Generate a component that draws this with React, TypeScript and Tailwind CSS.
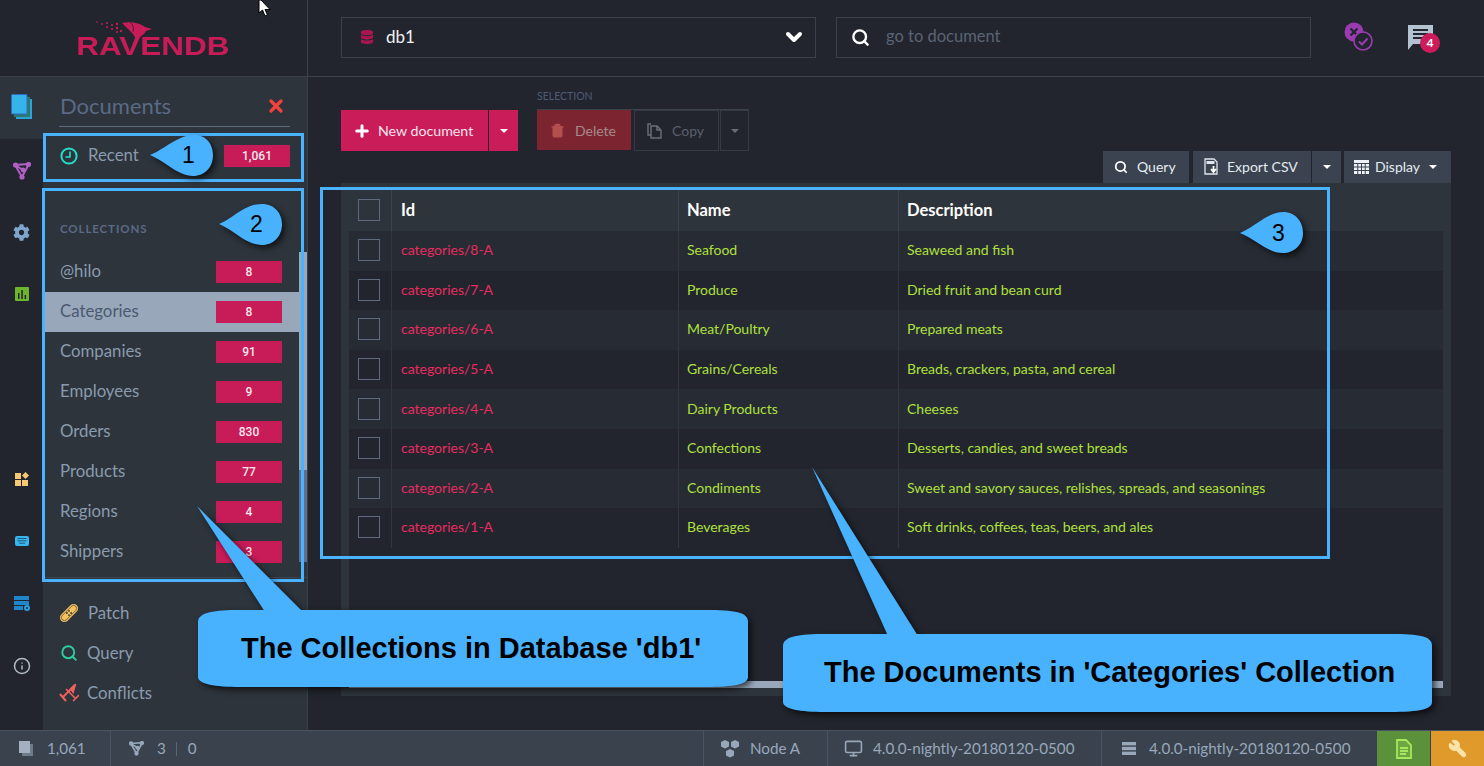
import { ChevronDown, Search, Info, Plus, Trash2, X, Monitor, Wrench } from 'lucide-react';
import { FaCog, FaDatabase } from 'react-icons/fa';

const collections = [
  { name: '@hilo', count: '8' },
  { name: 'Categories', count: '8', active: true },
  { name: 'Companies', count: '91' },
  { name: 'Employees', count: '9' },
  { name: 'Orders', count: '830' },
  { name: 'Products', count: '77' },
  { name: 'Regions', count: '4' },
  { name: 'Shippers', count: '3' },
];

const rows = [
  ['categories/8-A', 'Seafood', 'Seaweed and fish'],
  ['categories/7-A', 'Produce', 'Dried fruit and bean curd'],
  ['categories/6-A', 'Meat/Poultry', 'Prepared meats'],
  ['categories/5-A', 'Grains/Cereals', 'Breads, crackers, pasta, and cereal'],
  ['categories/4-A', 'Dairy Products', 'Cheeses'],
  ['categories/3-A', 'Confections', 'Desserts, candies, and sweet breads'],
  ['categories/2-A', 'Condiments', 'Sweet and savory sauces, relishes, spreads, and seasonings'],
  ['categories/1-A', 'Beverages', 'Soft drinks, coffees, teas, beers, and ales'],
];

function Caret({ className = 'border-t-white' }: { className?: string }) {
  return <span className={`inline-block w-0 h-0 border-x-[4px] border-x-transparent border-t-[4px] ${className}`} />;
}

function Badge({ value, width = 'w-[66px]' }: { value: string; width?: string }) {
  return (
    <span className={`${width} h-[22px] bg-[#c81c58] text-[#f5e6ee] text-[12px] font-[Roboto,sans-serif] font-medium flex items-center justify-center shrink-0`}>
      {value}
    </span>
  );
}

function GitIcon({ color, size = 18 }: { color: string; size?: number }) {
  return (
    <svg width={size} height={size} viewBox="0 0 18 18" fill="none" stroke={color} strokeWidth="2">
      <path d="M2 3 L16 2 L9 15 Z M2 3 L10 8" />
      <circle cx="2.5" cy="3" r="1.6" fill={color} />
      <circle cx="15.5" cy="2.5" r="1.6" fill={color} />
      <circle cx="9" cy="15" r="1.6" fill={color} />
      <circle cx="10" cy="8" r="1.4" fill={color} />
    </svg>
  );
}

function RailIcons() {
  return (
    <div className="w-[43px] shrink-0 flex flex-col items-center">
      <div className="w-full h-[62px] bg-[#2d343b] flex items-center justify-center pb-[2px]">
        <svg width="22" height="26" viewBox="0 0 22 26">
          <rect x="5" y="5" width="16" height="20" fill="#2aa3d6" />
          <rect x="3" y="3" width="16" height="20" fill="#2c7a6f" />
          <rect x="0.5" y="0.5" width="15.5" height="19.5" rx="1" fill="#35b4ec" stroke="#3467c7" />
        </svg>
      </div>
      <div className="h-[63px] flex items-center justify-center">
        <GitIcon color="#b45fc4" />
      </div>
      <div className="h-[61px] flex items-center justify-center">
        <FaCog size={17} color="#7ea6cc" />
      </div>
      <div className="h-[62px] flex items-center justify-center">
        <svg width="14" height="14" viewBox="0 0 14 14">
          <rect width="14" height="14" rx="1" fill="#6cb52d" />
          <path d="M3 6h1.5v6H3zM6.3 3h1.5v9H6.3zM9.6 8h1.5v4H9.6z" fill="#22252d" />
        </svg>
      </div>
      <div className="h-[123px]" />
      <div className="h-[62px] flex items-center justify-center">
        <svg width="14" height="14" viewBox="0 0 14 14" fill="#f7c873">
          <rect x="0" y="1" width="6" height="6" />
          <rect x="0" y="8" width="6" height="6" />
          <rect x="7" y="8" width="6" height="6" />
          <path d="M10.5 0 L14 3.5 L10.5 7 L7 3.5 Z" />
        </svg>
      </div>
      <div className="h-[62px] flex items-center justify-center">
        <svg width="14" height="10" viewBox="0 0 14 10">
          <rect width="14" height="10" rx="2" fill="#39b5ee" />
          <path d="M2.5 2.5h9M2.5 4.8h9M4 7.2h6" stroke="#1d5a7f" strokeWidth="1" />
        </svg>
      </div>
      <div className="h-[63px] flex items-center justify-center">
        <svg width="16" height="15" viewBox="0 0 16 15" fill="#1f86c9">
          <rect width="15" height="4" />
          <rect y="5" width="15" height="4" />
          <rect y="10" width="9" height="4" />
          <circle cx="13" cy="12" r="3" fill="#2aa0e6" />
          <circle cx="13" cy="12" r="1" fill="#22252d" />
        </svg>
      </div>
      <div className="h-[61px] flex items-center justify-center">
        <Info size={18} color="#b2bbc7" strokeWidth={2} />
      </div>
    </div>
  );
}

function DocumentsPanel() {
  return (
    <div className="flex-1 min-w-0 bg-[#2d343b] flex flex-col">
      <div className="h-[50px] mx-[16px] w-[231px] border-b border-[#5d6a80] flex items-center justify-between pr-[4px] pt-[8px]">
        <span className="text-[22px] text-[#5b6a85] pl-px">Documents</span>
        <X size={20} color="#f0413c" strokeWidth={4} />
      </div>
      <div className="h-[57px] pl-[17px] pr-[17px] flex items-center">
        <svg width="18" height="18" viewBox="0 0 18 18" fill="none" stroke="#26dccb" strokeWidth="2">
          <circle cx="9" cy="9" r="7.6" />
          <path d="M10 4.5V10H5.5" strokeWidth="1.6" />
        </svg>
        <span className="ml-[10px] pb-[2px] text-[16.8px] text-[#8a9bae] flex-1">Recent</span>
        <Badge value="1,061" />
      </div>
      <div className="h-[394px] flex border-b border-[#3d4550]">
        <div className="flex-1 min-w-0 flex flex-col">
          <div className="h-[68px] shrink-0 flex items-end pb-[15px] pl-[17px] text-[11.5px] font-bold tracking-[0.9px] text-[#5b6a85]">COLLECTIONS</div>
          {collections.map((c) => (
            <div key={c.name} className={`h-[40px] shrink-0 pl-[17px] pr-[17px] flex items-center justify-between text-[16.8px] ${c.active ? 'bg-[#98a8ba] text-[#4b5870]' : 'text-[#8a9bae]'}`}>
              <span className="pb-[2px]">{c.name}</span>
              <Badge value={c.count} />
            </div>
          ))}
        </div>
        <div className="w-[8px] shrink-0 pt-[68px] flex flex-col">
          <div className="h-[218px] bg-[#98a8ba]" />
          <div className="h-[92px] bg-[#5f6f8f]" />
        </div>
      </div>
      <div className="pt-[15px] flex flex-col text-[16.8px] text-[#8a9bae]">
        <div className="h-[40px] flex items-center pl-[16px]">
          <svg width="20" height="20" viewBox="0 0 20 20">
            <g transform="rotate(45 10 10)">
              <rect x="5.5" y="-1" width="9" height="22" rx="4.5" fill="#f5c15c" />
              <rect x="7" y="0.5" width="6" height="19" rx="3" fill="none" stroke="#2d343b" strokeWidth="0.6" />
              <circle cx="8.5" cy="8.5" r="0.9" fill="#2d343b" />
              <circle cx="11.5" cy="8.5" r="0.9" fill="#2d343b" />
              <circle cx="8.5" cy="11.5" r="0.9" fill="#2d343b" />
              <circle cx="11.5" cy="11.5" r="0.9" fill="#2d343b" />
            </g>
          </svg>
          <span className="ml-[9px]">Patch</span>
        </div>
        <div className="h-[40px] flex items-center pl-[17px]">
          <Search size={18} color="#2ecf9f" strokeWidth={2.5} />
          <span className="ml-[9px]">Query</span>
        </div>
        <div className="h-[40px] flex items-center pl-[16px]">
          <svg width="20" height="18" viewBox="0 0 20 18" fill="none" stroke="#f0605c" strokeWidth="2">
            <path d="M16 1 L3 14 M1 10 L7 17" />
            <path d="M7 5 L17 15 M20 11 L14 17" strokeWidth="1.6" />
            <path d="M12 5 L16 1 L14 8 Z" fill="#f0605c" />
          </svg>
          <span className="ml-[8px]">Conflicts</span>
        </div>
      </div>
    </div>
  );
}

function TopBar() {
  return (
    <div className="h-[77px] shrink-0 flex border-b border-[#3a414c]">
      <div className="w-[308px] shrink-0 border-r border-[#3a414c] flex flex-col items-center justify-center relative">
        <svg width="66" height="20" viewBox="0 0 66 20" className="absolute left-[96px] top-[21px]" fill="#c81c58">
          <path d="M26 2 C34 0 44 2 49 6 L56 8 L50 10 C48 14 44 16 40 18 C38 13 31 7 26 2 Z" />
          <path d="M34 1 C37 3 38 7 37 11" stroke="#22252d" strokeWidth="0.8" fill="none" />
          <circle cx="1" cy="1" r="0.8" />
          <circle cx="6" cy="3" r="0.9" />
          <circle cx="11" cy="2" r="1" />
          <circle cx="11" cy="6" r="1" />
          <circle cx="16" cy="4" r="1.1" />
          <circle cx="16" cy="8" r="1.1" />
          <circle cx="21" cy="3" r="1.2" />
          <circle cx="21" cy="7" r="1.2" />
          <circle cx="21" cy="11" r="1" />
          <circle cx="25" cy="10" r="1.2" />
        </svg>
        <span className="mt-[17px] ml-[-1px] text-[25px] leading-none font-bold font-['Liberation_Sans',Arial,sans-serif] text-[#c81c58] scale-x-[1.26]">RAVENDB</span>
      </div>
      <div className="flex-1 min-w-0 pl-[33px] flex items-center pb-[2px]">
        <div className="w-[475px] h-[41px] border border-[#3a414c] flex items-center pl-[18px] pr-[9px]">
          <FaDatabase size={14} color="#a81650" />
          <span className="ml-[12px] text-[17px] text-[#eef2f6] flex-1">db1</span>
          <ChevronDown size={24} color="#ffffff" strokeWidth={4} />
        </div>
        <div className="ml-[20px] w-[475px] h-[41px] border border-[#3a414c] flex items-center pl-[14px]">
          <Search size={19} color="#ffffff" strokeWidth={3} />
          <span className="ml-[16px] pb-[2px] text-[16.5px] text-[#5a6475]">go to document</span>
        </div>
        <div className="ml-[33px] relative w-[30px] h-[30px]">
          <svg width="30" height="30" viewBox="0 0 30 30" fill="none">
            <circle cx="10" cy="10" r="9.5" fill="#9a3cb0" />
            <path d="M6.5 6.5l7 7M13.5 6.5l-7 7" stroke="#22252d" strokeWidth="2.2" />
            <circle cx="19" cy="19" r="9" fill="#22252d" stroke="#9a3cb0" strokeWidth="1.6" />
            <path d="M15 19.5l3 3 5.5-6" stroke="#9a3cb0" strokeWidth="2" />
          </svg>
        </div>
        <div className="ml-[34px] mt-[6px] relative w-[32px] h-[30px]">
          <svg width="26" height="25" viewBox="0 0 26 25">
            <path d="M0 0H25V19H5L0 25Z" fill="#b4c3d2" />
            <path d="M5 5h15M5 9h15M5 13h10" stroke="#22252d" strokeWidth="1.8" />
          </svg>
          <span className="absolute left-[12px] top-[8px] w-[20px] h-[20px] rounded-full bg-[#cc1c5c] text-white text-[12px] font-bold flex items-center justify-center">4</span>
        </div>
      </div>
    </div>
  );
}

function Toolbar() {
  return (
    <div>
      <div className="h-[33px] flex">
        <div className="ml-[196px] w-[212px] border-b border-[#3a414c] pt-[13px] text-[10.5px] leading-[13px] text-[#4d5b78]">SELECTION</div>
      </div>
      <div className="flex items-start">
        <div className="w-[147px] h-[41px] bg-[#cb1c5a] flex items-center pl-[12px] text-[14.2px] text-[#f4e4ec]">
          <Plus size={18} color="#ffffff" strokeWidth={4} />
          <span className="ml-[7px]">New document</span>
        </div>
        <div className="ml-px w-[29px] h-[41px] bg-[#cb1c5a] flex items-center justify-center">
          <Caret />
        </div>
        <div className="ml-[19px] w-[94px] h-[40px] bg-[#7c2530] flex items-center pl-[13px] text-[14px] text-[#a58a8c]">
          <Trash2 size={15} color="#b3504f" fill="#b3504f" />
          <span className="ml-[10px]">Delete</span>
        </div>
        <div className="ml-[3px] w-[85px] h-[41px] border border-[#353b45] flex items-center pl-[12px] text-[14px] text-[#5b616c]">
          <svg width="15" height="16" viewBox="0 0 15 16" fill="none" stroke="#6a707b" strokeWidth="1.4">
            <path d="M4 1H1V12H4" />
            <path d="M4 3H10L14 7V15H4Z" />
            <path d="M10 3V7H14" />
          </svg>
          <span className="ml-[10px]">Copy</span>
        </div>
        <div className="ml-px w-[29px] h-[41px] border border-[#353b45] flex items-center justify-center">
          <Caret className="border-t-[#666d78]" />
        </div>
      </div>
      <div className="h-[32px] flex justify-end text-[14px] text-[#e4ebf2]">
        <div className="w-[86px] bg-[#3a434f] flex items-center pl-[11px] pb-px">
          <Search size={14} color="#ffffff" strokeWidth={3} />
          <span className="ml-[9px]">Query</span>
        </div>
        <div className="ml-[4px] w-[118px] bg-[#3a434f] flex items-center pl-[11px] pb-px">
          <svg width="14" height="17" viewBox="0 0 14 17" fill="none">
            <path d="M1 1H10L13 4V16H1Z" stroke="#dfe6ee" strokeWidth="1.3" />
            <rect x="2.5" y="3" width="8" height="3" fill="#dfe6ee" />
            <path d="M9.5 8v5M7 11l2.5 3 2.5-3" stroke="#ffffff" strokeWidth="1.8" />
          </svg>
          <span className="ml-[9px]">Export CSV</span>
        </div>
        <div className="ml-px w-[29px] bg-[#3a434f] flex items-center justify-center">
          <Caret />
        </div>
        <div className="ml-[3px] w-[107px] bg-[#3a434f] flex items-center pl-[10px] pb-px">
          <svg width="15" height="14" viewBox="0 0 15 14">
            <rect width="15" height="14" fill="#eef2f6" />
            <path d="M0 3.5h15M0 7h15M0 10.5h15M3.75 3v11M7.5 3v11M11.25 3v11" stroke="#3a434f" strokeWidth="1" />
          </svg>
          <span className="ml-[6px]">Display</span>
          <span className="ml-[9px] flex"><Caret /></span>
        </div>
      </div>
    </div>
  );
}

function Checkbox() {
  return <span className="block w-[22px] h-[22px] border border-[#5d6a80]" />;
}

function DocumentsTable() {
  return (
    <div className="h-[513px] bg-[#2d343b] px-[8px] pt-[6px] pb-[8px] flex flex-col">
      <div className="h-[42px] shrink-0 grid grid-cols-[43px_287px_220px_1fr] text-[16.5px] font-bold text-white">
        <div className="border-r border-[#3a4450] pl-[9px] pt-[10px]"><Checkbox /></div>
        <div className="border-r border-[#3a4450] pl-[9px] flex items-center">Id</div>
        <div className="border-r border-[#3a4450] pl-[8px] flex items-center">Name</div>
        <div className="pl-[8px] flex items-center">Description</div>
      </div>
      <div className="flex-1 min-h-0 bg-[#22252d]">
        {rows.map((r, i) => (
          <div key={r[0]} className={`h-[39.6px] grid grid-cols-[43px_287px_220px_1fr] text-[14px] ${i % 2 === 0 ? 'bg-[#272b33]' : 'bg-[#22252d]'}`}>
            <div className="border-r border-[#31363f] pl-[9px] flex items-center pb-px"><Checkbox /></div>
            <div className="border-r border-[#31363f] pl-[9px] flex items-center pb-[2px] text-[#e82c60]">{r[0]}</div>
            <div className="border-r border-[#31363f] pl-[8px] flex items-center pb-[2px] text-[#aee03f]">{r[1]}</div>
            <div className="pl-[8px] flex items-center pb-[2px] text-[#aee03f]">{r[2]}</div>
          </div>
        ))}
      </div>
      <div className="h-[7px] shrink-0 bg-[#98a8ba]" />
    </div>
  );
}

function Footer() {
  return (
    <div className="h-[36px] shrink-0 bg-[#3a424e] border-t border-[#4a5361] flex items-stretch text-[15.2px] text-[#98a8ba]">
      <div className="w-[111px] border-r border-[#4a5361] flex items-center pl-[19px]">
        <svg width="14" height="15" viewBox="0 0 14 15">
          <rect x="3" y="3" width="11" height="12" fill="#6f7b8b" />
          <rect x="0" y="0" width="11" height="12" fill="#a4b0bf" />
        </svg>
        <span className="ml-[14px]">1,061</span>
      </div>
      <div className="flex-1 border-r border-[#4a5361] flex items-center pl-[18px]">
        <GitIcon color="#98a8ba" size={15} />
        <span className="ml-[13px]">3</span>
        <span className="ml-[10px] w-px h-[14px] bg-[#5a6474]" />
        <span className="ml-[11px]">0</span>
      </div>
      <div className="w-[124px] border-r border-[#4a5361] flex items-center pl-[16px]">
        <svg width="20" height="18" viewBox="0 0 20 18" fill="#98a8ba">
          <path d="M5 0l4 2v4.5l-4 2-4-2V2zM15 0l4 2v4.5l-4 2-4-2V2zM10 9l4 2v4.5l-4 2-4-2V11z" />
        </svg>
        <span className="ml-[10px]">Node A</span>
      </div>
      <div className="w-[274px] border-r border-[#4a5361] flex items-center pl-[16px]">
        <Monitor size={19} color="#98a8ba" />
        <span className="ml-[10px]">4.0.0-nightly-20180120-0500</span>
      </div>
      <div className="w-[275px] flex items-center pl-[20px]">
        <svg width="14" height="13" viewBox="0 0 14 13" fill="#98a8ba">
          <rect width="14" height="3.4" />
          <rect y="4.8" width="14" height="3.4" />
          <rect y="9.6" width="14" height="3.4" />
        </svg>
        <span className="ml-[13px]">4.0.0-nightly-20180120-0500</span>
      </div>
      <div className="w-[53px] bg-[#5c913b] flex items-center justify-center">
        <svg width="16" height="20" viewBox="0 0 16 20" fill="none" stroke="#a5e85c" strokeWidth="1.8">
          <path d="M1 1H10L15 6V19H1Z" fill="#a5e85c" fillOpacity="0.25" />
          <path d="M4 9h8M4 12h8M4 15h6" />
        </svg>
      </div>
      <div className="ml-px w-[53px] bg-[#e09a2b] flex items-center justify-center">
        <Wrench size={19} color="#fbe3a8" fill="#fbe3a8" className="-scale-x-100" />
      </div>
    </div>
  );
}

function Annotations() {
  return (
    <>
      <div className="absolute left-[43px] top-[133px] w-[261px] h-[49px] border-[3px] border-[#4ab3ff]" />
      <div className="absolute left-[42px] top-[188px] w-[262px] h-[394px] border-[3px] border-[#4ab3ff]" />
      <div className="absolute left-[320px] top-[187px] w-[1010px] h-[372px] border-[3px] border-[#4ab3ff]" />
      <svg width="1484" height="766" viewBox="0 0 1484 766" className="absolute left-0 top-0 pointer-events-none drop-shadow-[3px_3px_3px_rgba(0,0,0,0.65)]">
        <g fill="#48b2ff">
          <path d="M150 155 C165 149 178 135 194 135 C207 135 213 145 213 155 C213 167 205 176 193 176 C178 176 165 161 150 155 Z" />
          <path d="M219 224 C234 218 244 204 262 204 C275 204 282 214 282 224 C282 236 274 245 262 245 C246 245 234 230 219 224 Z" />
          <path d="M1240 233 C1255 227 1268 212 1283 212 C1296 212 1303 222 1303 233 C1303 245 1294 253 1283 253 C1268 253 1255 239 1240 233 Z" />
          <path d="M197 506 L265 612 H303 Z" />
          <path d="M198 622 C198 612 215 610 240 610 H705 C735 610 748 612 748 622 V677 C748 684 735 687 705 687 H240 C215 687 198 684 198 677 Z" />
          <path d="M812 467 L888 636 H918 Z" />
          <path d="M783 646 C783 636 800 634 825 634 H1390 C1420 634 1432 636 1432 646 V702 C1432 709 1420 712 1390 712 H825 C800 712 783 709 783 702 Z" />
        </g>
      </svg>
      <span className="absolute left-[182px] top-[142px] font-['Liberation_Sans',Arial,sans-serif] text-[23px] leading-[26px] text-black">1</span>
      <span className="absolute left-[250px] top-[211px] font-['Liberation_Sans',Arial,sans-serif] text-[23px] leading-[26px] text-black">2</span>
      <span className="absolute left-[1272px] top-[220px] font-['Liberation_Sans',Arial,sans-serif] text-[23px] leading-[26px] text-black">3</span>
      <span className="absolute left-[241px] top-[632px] font-['Liberation_Sans',Arial,sans-serif] font-bold text-[29px] leading-[32px] text-black whitespace-nowrap">The Collections in Database 'db1'</span>
      <span className="absolute left-[824px] top-[656px] font-['Liberation_Sans',Arial,sans-serif] font-bold text-[29px] leading-[32px] text-black whitespace-nowrap">The Documents in 'Categories' Collection</span>
      <svg width="14" height="18" viewBox="0 0 14 18" className="absolute left-[258px] top-0">
        <path d="M1 0 V13 L4.5 10 L7 16 L9.5 15 L7 9.5 H12 L3 0 Z" fill="#ffffff" stroke="#000000" />
      </svg>
    </>
  );
}

export default function App() {
  return (
    <div className="relative w-[1484px] h-[766px] overflow-hidden bg-[#22252d] font-[Lato,sans-serif] flex flex-col">
      <TopBar />
      <div className="flex-1 min-h-0 flex">
        <div className="w-[308px] shrink-0 flex border-r border-[#3a414c]">
          <RailIcons />
          <DocumentsPanel />
        </div>
        <div className="flex-1 min-w-0 pl-[33px] pr-[33px]">
          <Toolbar />
          <DocumentsTable />
        </div>
      </div>
      <Footer />
      <Annotations />
    </div>
  );
}
